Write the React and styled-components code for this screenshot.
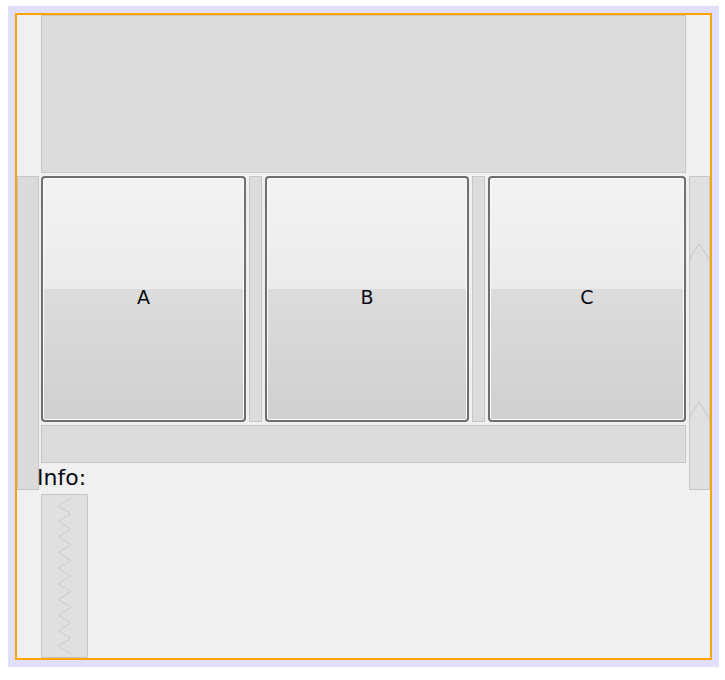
import React from "react";
import styled, { createGlobalStyle } from "styled-components";

const Global = createGlobalStyle`
  html, body { margin: 0; padding: 0; background: #ffffff; }
  body { font-family: "DejaVu Sans", sans-serif; }
`;

const Frame = styled.div`
  box-sizing: border-box;
  margin: 6px 0 0 8px;
  width: 711px;
  height: 661px;
  padding: 7px;
  background: #e0e0fe;
`;

const Window = styled.div`
  box-sizing: border-box;
  height: 100%;
  border: 2px solid #ffa500;
  background: #f0f0f0;
  display: grid;
  grid-template-columns: 22px 2px 645px 3px 21px;
  grid-template-rows: 158px 3px 246px 3px 38px 27px 4px 1fr;
`;

const Panel = styled.div`
  box-sizing: border-box;
  grid-column: ${(p) => p.$col};
  grid-row: ${(p) => p.$row};
  background: ${(p) => p.$bg || "#dcdcdc"};
  border: 1px solid #c6c6c6;
`;

const Strip = styled.div`
  box-sizing: border-box;
  grid-column: ${(p) => p.$col};
  grid-row: 3 / 7;
  background: ${(p) => p.$bg};
  border: 1px solid #c6c6c6;
  display: flex;
  flex-direction: column;
  align-items: center;
`;

const ButtonRow = styled.div`
  grid-column: 3;
  grid-row: 3;
  display: flex;
  gap: 3px;
`;

const Separator = styled.div`
  box-sizing: border-box;
  width: 13px;
  background: #dcdcdc;
  border: 1px solid #c6c6c6;
`;

const Button = styled.div`
  box-sizing: border-box;
  width: ${(p) => p.$w}px;
  height: 100%;
  padding-bottom: 4px;
  border: 2px solid #6e6e6e;
  border-radius: 4px;
  box-shadow: inset 0 0 0 1px #fbfbfb;
  background: linear-gradient(
    to bottom,
    #f3f3f3 0%,
    #ebebeb 46%,
    #dcdcdc 46%,
    #d0d0d0 100%
  );
  display: flex;
  align-items: center;
  justify-content: center;
  font-family: "DejaVu Sans", sans-serif;
  font-size: 19px;
  color: #0a0a14;
`;

const Label = styled.div`
  grid-column: 2 / 4;
  grid-row: 6;
  margin-left: -2px;
  position: relative;
  z-index: 1;
  font-family: "DejaVu Sans", sans-serif;
  font-size: 22px;
  line-height: 29px;
  color: #0a0a14;
`;

const HandleBox = styled.div`
  box-sizing: border-box;
  grid-column: 3;
  grid-row: 8;
  width: 47px;
  height: 164px;
  background: #e0e0e0;
  border: 1px solid #c6c6c6;
  display: flex;
  justify-content: center;
  padding-top: 3px;
`;

const Chevron = styled.svg`
  display: block;
  margin-top: ${(p) => p.$top}px;
`;

function ChevronUp({ top }) {
  return (
    <Chevron $top={top} width="19" height="22" viewBox="0 0 19 22">
      <polyline
        points="0,18 1,14 9,2 17,14 19,18"
        fill="none"
        stroke="#cbcbcb"
        strokeWidth="1.2"
      />
    </Chevron>
  );
}

function Zigzag() {
  const pts = [];
  const period = 15.6;
  for (let i = 0; i < 10; i++) {
    const y = i * period;
    pts.push(`14,${y}`);
    pts.push(`1,${y + period / 2}`);
  }
  pts.push(`14,${10 * period}`);
  return (
    <svg width="16" height="158" viewBox="0 0 16 158">
      <polyline points={pts.join(" ")} fill="none" stroke="#cbcbcb" strokeWidth="1" />
    </svg>
  );
}

export default function App() {
  return (
    <>
      <Global />
      <Frame>
        <Window>
          <Panel $col="3" $row="1" />
          <Strip $col="1" $bg="#dadada" />
          <ButtonRow>
            <Button $w={205}>A</Button>
            <Separator />
            <Button $w={204}>B</Button>
            <Separator />
            <Button $w={198}>C</Button>
          </ButtonRow>
          <Strip $col="5" $bg="#e0e0e0">
            <ChevronUp top={65} />
            <ChevronUp top={136} />
          </Strip>
          <Panel $col="3" $row="5" />
          <Label>Info:</Label>
          <HandleBox>
            <Zigzag />
          </HandleBox>
        </Window>
      </Frame>
    </>
  );
}
